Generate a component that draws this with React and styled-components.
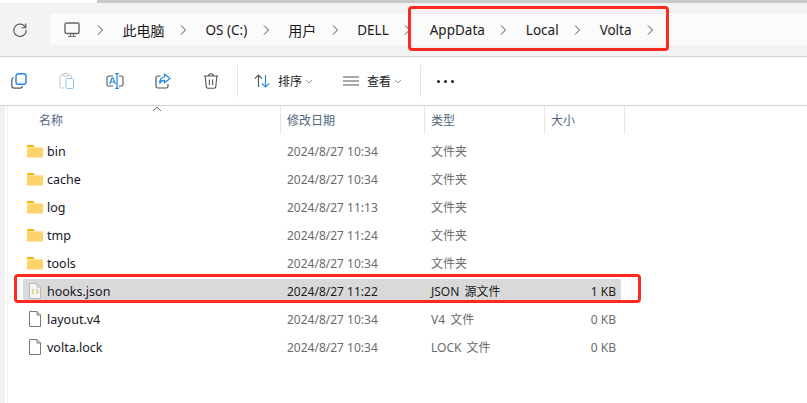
import { Fragment } from "react";
import styled, { createGlobalStyle } from "styled-components";

const GlobalStyle = createGlobalStyle`
  html, body {
    margin: 0;
    background: #fff;
    overflow: hidden;
  }
  * {
    box-sizing: border-box;
  }
`;

const files = [
  { name: "bin", date: "2024/8/27 10:34", type: "文件夹", kind: "folder" },
  { name: "cache", date: "2024/8/27 10:34", type: "文件夹", kind: "folder" },
  { name: "log", date: "2024/8/27 11:13", type: "文件夹", kind: "folder" },
  { name: "tmp", date: "2024/8/27 11:24", type: "文件夹", kind: "folder" },
  { name: "tools", date: "2024/8/27 10:34", type: "文件夹", kind: "folder" },
  { name: "hooks.json", date: "2024/8/27 11:22", type: "JSON 源文件", size: "1 KB", kind: "json", selected: true },
  { name: "layout.v4", date: "2024/8/27 10:34", type: "V4 文件", size: "0 KB", kind: "file" },
  { name: "volta.lock", date: "2024/8/27 10:34", type: "LOCK 文件", size: "0 KB", kind: "file" },
];

const crumbs = [
  { label: "此电脑", cjk: true },
  { label: "OS (C:)" },
  { label: "用户", cjk: true },
  { label: "DELL" },
  { label: "AppData" },
  { label: "Local" },
  { label: "Volta" },
];

const Page = styled.div`
  position: relative;
  width: 807px;
  height: 403px;
  overflow: hidden;
  display: flex;
  flex-direction: column;
  font-family: "Noto Sans", "Noto Sans CJK SC", sans-serif;
  color: #1a1a1a;
`;

const TopEdge = styled.div`
  height: 3px;
  margin-left: 97px;
  background: #c9c9c9;
`;

const AddressBand = styled.div`
  height: 54px;
  display: flex;
  align-items: center;
  padding-left: 12px;
  background: #f3f3f3;
  border-bottom: 1px solid #d4d4d4;
`;

const Refresh = styled.svg`
  width: 16px;
  height: 16px;
  margin-right: 22px;
`;

const Address = styled.div`
  flex: 1;
  height: 31px;
  display: flex;
  align-items: center;
  padding-left: 13.5px;
  background: #fbfbfb;
  border-radius: 4px 0 0 4px;
  white-space: nowrap;
`;

const Monitor = styled.svg`
  width: 16px;
  height: 16px;
  margin-right: 2px;
`;

const CrumbLabel = styled.span`
  font-size: ${(p) => (p.$cjk ? 14 : 13.5)}px;
`;

const Chevron = styled.svg`
  width: 8px;
  height: 12px;
  flex: none;
  margin: 0 18.5px 0 14.5px;
`;

const Toolbar = styled.div`
  height: 49px;
  display: flex;
  align-items: center;
  padding-left: 7px;
  background: #fff;
  border-bottom: 1px solid #cfcfcf;
`;

const ToolButton = styled.div`
  width: 24px;
  height: 24px;
  margin-right: 24px;
  display: flex;
  align-items: center;
  justify-content: center;
  &:nth-of-type(5) {
    margin-right: 14px;
  }
`;

const Separator = styled.div`
  width: 1px;
  height: 32px;
  margin-left: ${(p) => p.$left || 0}px;
  background: #e6e6e6;
`;

const MenuButton = styled.div`
  display: flex;
  align-items: center;
  margin-left: ${(p) => p.$left}px;
  font-size: 12px;
  gap: 8px;
`;

const SmallCaret = styled.svg`
  width: 8px;
  height: 5px;
  margin-left: -5px;
`;

const Dots = styled.div`
  display: flex;
  gap: 4px;
  margin-left: 16px;
  span {
    width: 3px;
    height: 3px;
    border-radius: 50%;
    background: #222;
  }
`;

const Body = styled.div`
  flex: 1;
  display: flex;
  background: #fff;
`;

const Sidebar = styled.div`
  width: 8px;
  padding-right: 2px;
  background: #f0f0f0;
  background-clip: content-box;
  border-right: 1px solid #f0f0f0;
`;

const Content = styled.div`
  flex: 1;
  position: relative;
`;

const Header = styled.div`
  height: 28px;
  display: grid;
  grid-template-columns: 273px 144px 120px 80px;
  margin-bottom: 3px;
`;

const HeaderCell = styled.div`
  display: flex;
  align-items: center;
  padding-left: ${(p) => p.$pad}px;
  font-size: 12px;
  color: #51657c;
  border-right: 1px solid #e4e4e4;
`;

const SortCaret = styled.svg`
  position: absolute;
  left: 144px;
  top: 0;
  width: 10px;
  height: 6px;
`;

const Row = styled.div`
  height: 28px;
  display: grid;
  grid-template-columns: 273px 144px 120px 76px;
  align-items: center;
  font-size: 12px;
  color: #6b6b6b;
  ${(p) => p.$selected && "color: #1c1c1c;"}
`;

const NameCell = styled.div`
  display: flex;
  align-items: center;
  gap: 4px;
  padding-left: 19px;
  font-size: 12.5px;
  color: #161628;
`;

const DateCell = styled.div`
  padding-left: 6px;
`;

const TypeCell = styled.div`
  padding-left: 6px;
  word-spacing: 2px;
`;

const SizeCell = styled.div`
  text-align: right;
  padding-right: 5px;
`;

const Selection = styled.div`
  position: absolute;
  left: 15px;
  top: 173px;
  width: 598px;
  height: 21px;
  background: #d9d9d9;
  border-radius: 2px;
  z-index: 0;
`;

const RowList = styled.div`
  position: relative;
  z-index: 1;
`;

const RedBox = styled.div`
  position: absolute;
  left: ${(p) => p.$x}px;
  top: ${(p) => p.$y}px;
  width: ${(p) => p.$w}px;
  height: ${(p) => p.$h}px;
  border: 3px solid #ff2a1f;
  border-radius: 4px;
  z-index: 2;
`;

const FolderIcon = () => (
  <svg width="16" height="14" viewBox="0 0 16 14">
    <path d="M0 2.5C0 1.6.6 1 1.5 1H6l2 2H0z" fill="#f5b400" />
    <rect x="0" y="3" width="16" height="10.5" rx="1.2" fill="#fcd36a" />
    <rect x="0" y="3" width="16" height="1.2" fill="#ffe39a" />
  </svg>
);

const FileIcon = ({ json }) => (
  <svg width="16" height="16" viewBox="0 0 16 16">
    <path d="M2.5.5h7.5l3.5 3.5v11.5h-11z" fill={json ? "#f4f4f4" : "#fff"} stroke={json ? "#b8b8b8" : "#7a7a7a"} />
    <path d="M10 .5v3.5h3.5" fill="none" stroke={json ? "#b8b8b8" : "#7a7a7a"} />
    {json && <path d="M6.5 6c-1 0-.5 2-1.3 2.5.8.5.3 2.5 1.3 2.5M9.5 6c1 0 .5 2 1.3 2.5-.8.5-.3 2.5-1.3 2.5" fill="none" stroke="#b5bd3a" />}
  </svg>
);

const Crumb = () => (
  <Chevron viewBox="0 0 8 12">
    <path d="M2 1.5 6.5 6 2 10.5" fill="none" stroke="#4a4a4a" strokeWidth="1" />
  </Chevron>
);

export default function App() {
  return (
    <Page>
      <GlobalStyle />
      <TopEdge />
      <AddressBand>
        <Refresh viewBox="0 0 16 16">
          <path d="M13.6 5.6A6.2 6.2 0 1 0 14.2 8" fill="none" stroke="#555" strokeWidth="1.1" />
          <path d="M13.8 1.6v4.2H9.6" fill="none" stroke="#555" strokeWidth="1.1" />
        </Refresh>
        <Address>
          <Monitor viewBox="0 0 16 16">
            <rect x="1" y="1" width="14" height="10.5" rx="1.5" fill="none" stroke="#666" strokeWidth="1.4" />
            <path d="M6.5 12v2M9.5 12v2M4 14.5h8" stroke="#777" strokeWidth="1.2" />
          </Monitor>
          {crumbs.map((c) => (
            <Fragment key={c.label}>
              <Crumb />
              <CrumbLabel $cjk={c.cjk}>{c.label}</CrumbLabel>
            </Fragment>
          ))}
          <Crumb />
        </Address>
      </AddressBand>
      <Toolbar>
        <ToolButton>
          <svg width="16" height="16" viewBox="0 0 16 16">
            <path d="M2.8 4.5C1.5 4.7.8 5.5.8 6.8v6c0 1.4 1 2.4 2.4 2.4h6c1.3 0 2.1-.7 2.3-2" fill="none" stroke="#555" strokeWidth="1.2" />
            <rect x="5" y=".8" width="10" height="10.5" rx="2.2" fill="none" stroke="#1f86e0" strokeWidth="1.4" />
          </svg>
        </ToolButton>
        <ToolButton>
          <svg width="16" height="16" viewBox="0 0 16 16" opacity=".5">
            <path d="M5 15H2.5C1.6 15 1 14.4 1 13.5v-10C1 2.6 1.6 2 2.5 2H11c.9 0 1.5.6 1.5 1.5V5" fill="none" stroke="#888" />
            <rect x="4" y=".5" width="5.5" height="2.5" rx="1" fill="#fff" stroke="#888" />
            <rect x="7" y="5.5" width="7.5" height="10" rx="1.2" fill="#fff" stroke="#1f86e0" />
          </svg>
        </ToolButton>
        <ToolButton>
          <svg width="18" height="16" viewBox="0 0 18 16">
            <path d="M7 3H2.8C1.8 3 1 3.8 1 4.8v6.4c0 1 .8 1.8 1.8 1.8H7M13 3h2.2c1 0 1.8.8 1.8 1.8v6.4c0 1-.8 1.8-1.8 1.8H13" fill="none" stroke="#555" strokeWidth="1.1" />
            <path d="M3.7 11 6 5h1l2.3 6M4.5 9h4" fill="none" stroke="#1f86e0" strokeWidth="1.2" />
            <path d="M11 .6v14.8M9.2.6h3.6M9.2 15.4h3.6" fill="none" stroke="#1f86e0" strokeWidth="1.2" />
          </svg>
        </ToolButton>
        <ToolButton>
          <svg width="16" height="16" viewBox="0 0 16 16">
            <path d="M5.5 3H2.8C1.8 3 1 3.8 1 4.8v8.4c0 1 .8 1.8 1.8 1.8h8.4c1 0 1.8-.8 1.8-1.8V11" fill="none" stroke="#555" strokeWidth="1.2" />
            <path d="M9.5 1.2 15 5.6l-5.5 4.2V7.4C7 7.3 5.5 8.4 4.6 10.4 4.7 6.8 6.5 4.3 9.5 4z" fill="none" stroke="#1f86e0" strokeWidth="1.2" />
          </svg>
        </ToolButton>
        <ToolButton>
          <svg width="16" height="16" viewBox="0 0 16 16">
            <path d="M.8 3h14.4M5.6 3c0-1.4 1-2.2 2.4-2.2s2.4.8 2.4 2.2M2.2 3l1 10.6c.1 1 .8 1.6 1.8 1.6h6c1 0 1.7-.6 1.8-1.6L13.8 3M6.4 6.500v5.500M9.6 6.500v5.500" fill="none" stroke="#555" strokeWidth="1.1" />
          </svg>
        </ToolButton>
        <Separator />
        <MenuButton $left={16}>
          <svg width="16" height="14" viewBox="0 0 16 14">
            <path d="M4.5 13V1M.8 4.7 4.5 1l3.700 3.700" fill="none" stroke="#555" strokeWidth="1.1" />
            <path d="M11.5 1v12M7.8 9.300l3.700 3.700 3.700-3.700" fill="none" stroke="#1f86e0" strokeWidth="1.1" />
          </svg>
          <span>排序</span>
          <SmallCaret viewBox="0 0 8 5">
            <path d="M1 1l3 3 3-3" fill="none" stroke="#999" />
          </SmallCaret>
        </MenuButton>
        <MenuButton $left={30}>
          <svg width="16" height="10" viewBox="0 0 16 10">
            <path d="M0 1h16M0 5h16M0 9h16" stroke="#555" strokeWidth="1" />
          </svg>
          <span>查看</span>
          <SmallCaret viewBox="0 0 8 5">
            <path d="M1 1l3 3 3-3" fill="none" stroke="#999" />
          </SmallCaret>
        </MenuButton>
        <Separator $left={18} />
        <Dots>
          <span />
          <span />
          <span />
        </Dots>
      </Toolbar>
      <Body>
        <Sidebar />
        <Content>
          <SortCaret viewBox="0 0 10 6">
            <path d="M1 5l4-4 4 4" fill="none" stroke="#666" />
          </SortCaret>
          <Header>
            <HeaderCell $pad={31}>名称</HeaderCell>
            <HeaderCell $pad={6}>修改日期</HeaderCell>
            <HeaderCell $pad={6}>类型</HeaderCell>
            <HeaderCell $pad={6}>大小</HeaderCell>
          </Header>
          <Selection />
          <RowList>
            {files.map((f) => (
              <Row key={f.name} $selected={f.selected}>
                <NameCell>
                  {f.kind === "folder" ? <FolderIcon /> : <FileIcon json={f.kind === "json"} />}
                  {f.name}
                </NameCell>
                <DateCell>{f.date}</DateCell>
                <TypeCell>{f.type}</TypeCell>
                <SizeCell>{f.size}</SizeCell>
              </Row>
            ))}
          </RowList>
        </Content>
      </Body>
      <RedBox $x={408} $y={6} $w={261} $h={45} />
      <RedBox $x={14} $y={274} $w={627} $h={29} />
    </Page>
  );
}
